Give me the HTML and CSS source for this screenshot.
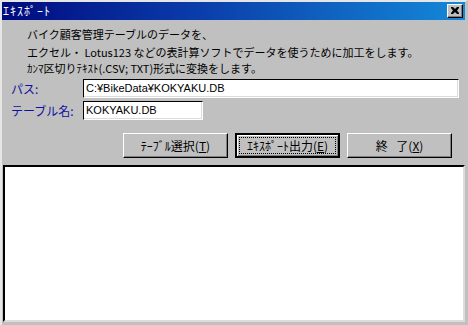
FILE: index.html
```html
<!DOCTYPE html>
<html lang="ja">
<head>
<meta charset="utf-8">
<title>ｴｷｽﾎﾟｰﾄ</title>
<link rel="stylesheet" href="styles.css">
</head>
<body>
<div class="window">
  <div class="titlebar">
    <span class="title">ｴｷｽﾎﾟｰﾄ</span>
    <button class="close" type="button" aria-label="閉じる">
      <svg width="8" height="7" viewBox="0 0 8 7"><path d="M0 0h2l2 2 2-2h2v1L6 3.5 8 6v1H6L4 5 2 7H0V6l2-2.5L0 1z" fill="#000"/></svg>
    </button>
  </div>
  <div class="desc">
    <p class="line first">バイク顧客管理テーブルのデータを、</p>
    <p class="line">エクセル・ Lotus123 などの表計算ソフトでデータを使うために加工をします。</p>
    <p class="line">ｶﾝﾏ区切りﾃｷｽﾄ(.CSV; TXT)形式に変換をします。</p>
  </div>
  <div class="row">
    <label class="label">パス:</label>
    <div class="field wide">C:¥BikeData¥KOKYAKU.DB</div>
  </div>
  <div class="row">
    <label class="label">テーブル名:</label>
    <div class="field narrow">KOKYAKU.DB</div>
  </div>
  <div class="buttons">
    <button class="btn" type="button"><span class="cap">ﾃｰﾌﾞﾙ選択(<u>T</u>)</span></button>
    <button class="btn default" type="button"><span class="cap focus">ｴｷｽﾎﾟｰﾄ出力(<u>E</u>)</span></button>
    <button class="btn" type="button"><span class="cap spaced">終 了(<u>X</u>)</span></button>
  </div>
  <div class="list"></div>
</div>
</body>
</html>
```
FILE: styles.css
```css
* { box-sizing: border-box; }
html, body { margin: 0; padding: 0; background: #c0c0c0; }
body { font-family: "Noto Sans CJK JP", "Liberation Sans", sans-serif; font-size: 11px; color: #000; }

.window {
  width: 468px;
  height: 325px;
  background: #c0c0c0;
  border-top: 2px solid #e6e6e6;
  border-left: 2px solid #e6e6e6;
  border-right: 3px solid #c0c0c0;
  display: flex;
  flex-direction: column;
  overflow: hidden;
}

.titlebar {
  height: 18px;
  background: linear-gradient(to right, #000a80 0%, #0a3aa8 40%, #1488d8 100%);
  display: flex;
  align-items: center;
  justify-content: space-between;
  padding-left: 1px;
  padding-right: 2px;
}
.title { color: #fff; font-size: 12px; line-height: 18px; letter-spacing: 1px; }
.close {
  width: 16px;
  height: 14px;
  padding: 0;
  margin: 0;
  background: #c0c0c0;
  border: 1px solid;
  border-color: #fff #000 #000 #fff;
  box-shadow: inset -1px -1px #808080;
  display: flex;
  align-items: center;
  justify-content: center;
}
.close svg { display: block; margin-left: -1px; margin-top: -1px; }

.desc { margin-top: 6px; padding-left: 25px; }
.line { margin: 0; height: 16px; line-height: 16px; white-space: nowrap; }
.line.first { margin-bottom: 2px; }

.row { display: flex; align-items: center; height: 19px; margin-top: 3px; }
.label { width: 81px; padding-left: 9px; color: #1010a0; font-size: 12px; line-height: 19px; }
.field {
  height: 19px;
  background: #fff;
  border: 1px solid;
  border-color: #000 #fff #fff #000;
  box-shadow: inset -1px -1px #dcdcdc;
  padding-left: 2px;
  font-family: "Liberation Sans", sans-serif;
  font-size: 11px;
  line-height: 17px;
  white-space: nowrap;
}
.wide { width: 376px; }
.narrow { width: 120px; }

.buttons {
  display: flex;
  justify-content: flex-end;
  gap: 7px;
  padding-right: 13px;
  margin-top: 13px;
}
.btn {
  width: 105px;
  height: 25px;
  padding: 0;
  margin: 0;
  background: #c0c0c0;
  border: 1px solid;
  border-color: #fff #000 #000 #fff;
  box-shadow: inset -1px -1px #808080;
  font-family: "Noto Sans CJK JP", sans-serif;
  font-size: 12px;
  color: #000;
  display: flex;
  align-items: center;
  justify-content: center;
}
.btn.default {
  border: 2px solid #000;
  box-shadow: inset 1px 1px #fff, inset -1px -1px #808080;
  padding: 2px;
}
.cap { line-height: 16px; white-space: nowrap; }
.cap u { text-decoration-thickness: 1px; text-underline-offset: 1px; }
.spaced { word-spacing: 6px; }
.focus {
  flex: 1;
  align-self: stretch;
  border: 1px dotted #000;
  display: flex;
  align-items: center;
  justify-content: center;
}

.list {
  margin-top: 7px;
  margin-left: 1px;
  width: 462px;
  height: 157px;
  background: #fff;
  border: 2px solid;
  border-color: #000 #dcdcdc #dcdcdc #000;
}
```
